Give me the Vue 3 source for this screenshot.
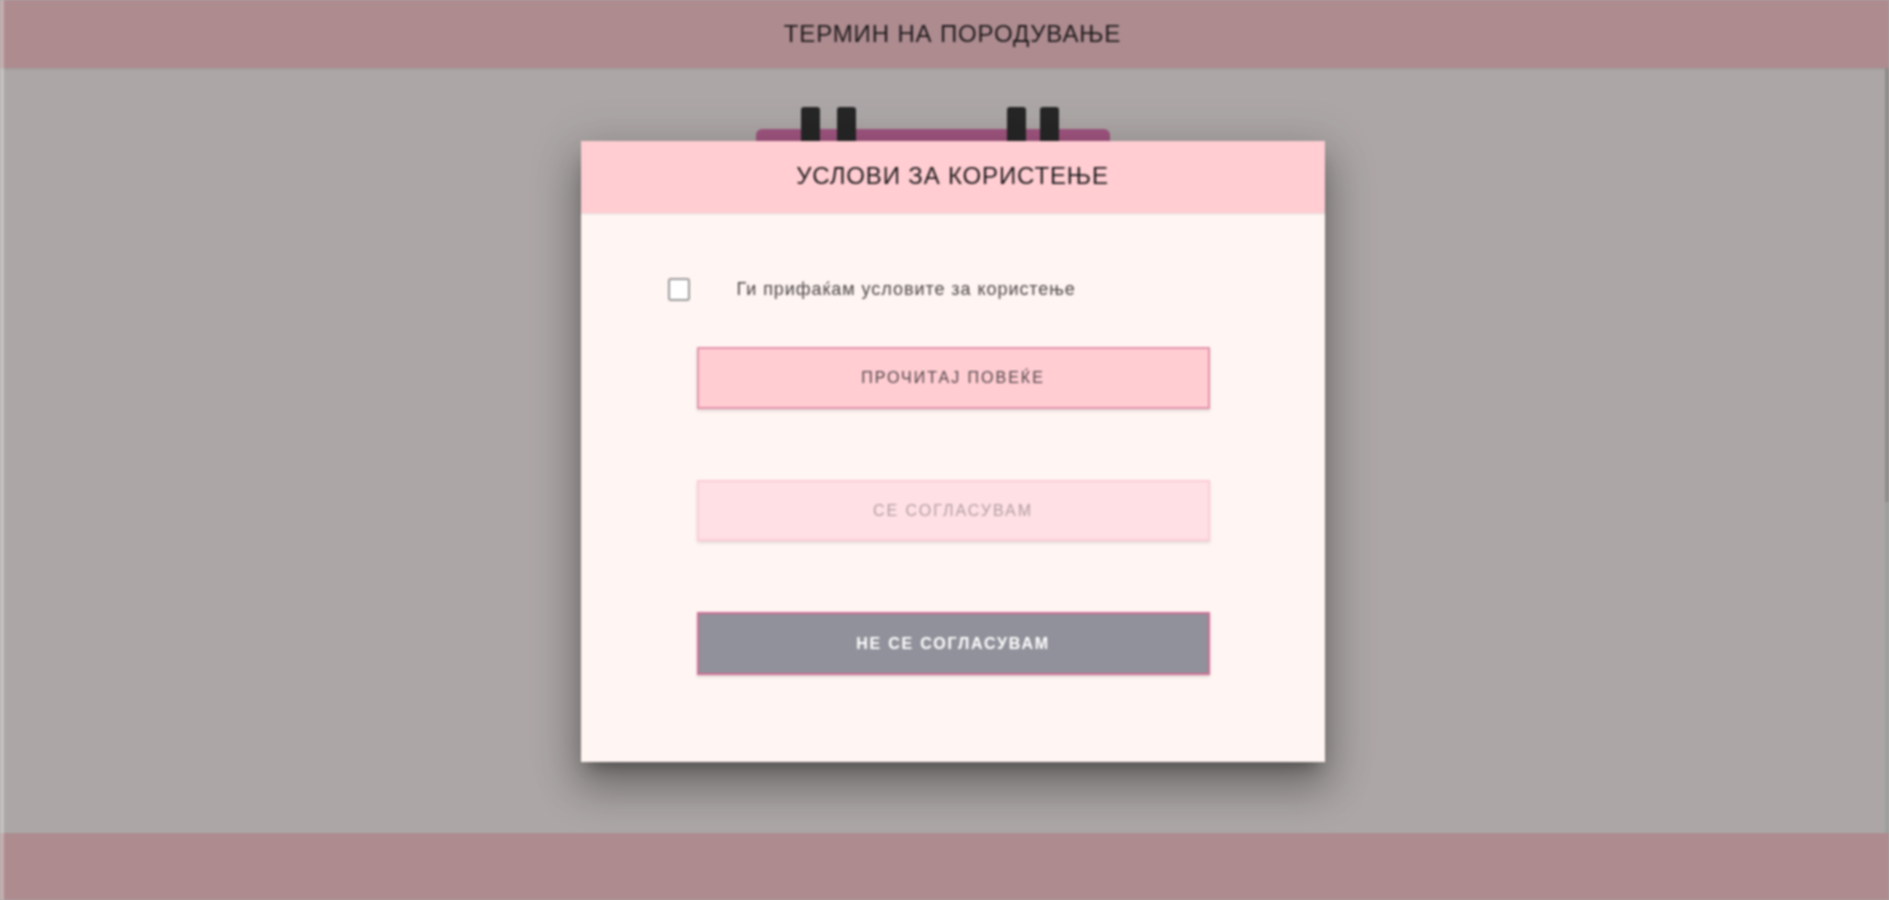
<template>
  <div class="page">
    <header class="bar top-bar">
      <h1 class="page-title">ТЕРМИН НА ПОРОДУВАЊЕ</h1>
    </header>

    <main class="content">
      <div class="dialog-wrap">
        <div class="calendar">
          <div v-for="(group, i) in pinGroups" :key="i" class="pin-group">
            <span v-for="pin in group" :key="pin" class="pin"></span>
          </div>
        </div>

        <section class="dialog">
          <div class="dialog-head">
            <h2 class="dialog-title">УСЛОВИ ЗА КОРИСТЕЊЕ</h2>
          </div>
          <div class="dialog-body">
            <label class="accept-row">
              <input v-model="accepted" type="checkbox" class="accept-box" />
              <span class="accept-text">Ги прифаќам условите за користење</span>
            </label>
            <div class="actions">
              <button type="button" class="btn btn-read">ПРОЧИТАЈ ПОВЕЌЕ</button>
              <button type="button" class="btn btn-agree" :disabled="!accepted">СЕ СОГЛАСУВАМ</button>
              <button type="button" class="btn btn-decline">НЕ СЕ СОГЛАСУВАМ</button>
            </div>
          </div>
        </section>
      </div>
    </main>

    <footer class="bar bottom-bar"></footer>

    <div class="edge edge-left"></div>
    <div class="edge edge-right"></div>
  </div>
</template>

<script setup>
import { ref } from 'vue';

const accepted = ref(false);
const pinGroups = [[1, 2], [3, 4]];
</script>

<style>
html, body {
  margin: 0;
  overflow: hidden;
  background: #aca7a6;
}
</style>

<style scoped>
.page {
  position: relative;
  height: 900px;
  display: flex;
  flex-direction: column;
  background: #aca7a6;
  font-family: "Liberation Sans", Arial, sans-serif;
  color: #1e1a1c;
  overflow: hidden;
  filter: blur(0.9px);
}

.bar {
  background: #ad8b8f;
  display: flex;
  align-items: center;
  justify-content: center;
  padding-left: 16px;
  flex: none;
}

.top-bar {
  height: 68px;
  box-shadow: 0 1px 2px rgba(0, 0, 0, 0.1);
}

.bottom-bar {
  height: 67px;
}

.page-title,
.dialog-title {
  margin: 0;
  font-size: 24px;
  font-weight: 400;
  line-height: 1;
  letter-spacing: 0.85px;
}

.content {
  flex: 1;
  display: flex;
  align-items: flex-start;
  justify-content: center;
  padding: 73px 0 0 16px;
}

.dialog-wrap {
  position: relative;
  width: 744px;
}

.calendar {
  position: absolute;
  left: 175px;
  bottom: 100%;
  width: 354px;
  height: 12px;
  background: #a0557f;
  border-radius: 6px 6px 0 0;
  display: flex;
  justify-content: space-between;
  padding: 0 51px 0 45px;
  box-sizing: border-box;
}

.pin-group {
  display: flex;
  gap: 17px;
  align-items: flex-end;
}

.pin-group:last-child {
  gap: 14px;
}

.pin {
  width: 19px;
  height: 34px;
  background: #262626;
  border-radius: 3px 3px 0 0;
}

.dialog {
  position: relative;
  height: 621px;
  background: #fff5f3;
  box-shadow: 0 11px 15px -7px rgba(0, 0, 0, 0.3), 0 24px 38px 3px rgba(0, 0, 0, 0.28), 0 9px 46px 8px rgba(0, 0, 0, 0.12);
}

.dialog-head {
  height: 72px;
  box-sizing: border-box;
  padding-bottom: 2px;
  background: #ffcdd2;
  display: flex;
  align-items: center;
  justify-content: center;
  box-shadow: 0 1px 2px rgba(0, 0, 0, 0.12);
}

.dialog-body {
  padding: 64px 115px 0 87px;
}

.accept-row {
  display: flex;
  align-items: center;
  gap: 47px;
  height: 24px;
}

.accept-box {
  appearance: none;
  margin: 0;
  width: 22px;
  height: 23px;
  background: #fff;
  border: 2px solid #9c9a9a;
  border-radius: 3px;
  box-sizing: border-box;
}

.accept-text {
  font-size: 18px;
  letter-spacing: 0.95px;
  color: #4a4546;
}

.actions {
  display: flex;
  flex-direction: column;
  gap: 71px;
  margin: 46px 0 0 29px;
}

.btn {
  height: 62px;
  font-family: inherit;
  font-size: 16px;
  letter-spacing: 2px;
  border: 2px solid #e492aa;
  background: #ffcdd2;
  color: #50454a;
  box-shadow: 0 2px 3px rgba(0, 0, 0, 0.12);
  padding: 0;
}

.btn-agree {
  height: 61px;
  background: #ffe0e4;
  border-color: #fccdd6;
  color: #b19ea3;
}

.btn-decline {
  height: 63px;
  background: #90919a;
  border-color: #cf6f94;
  color: #fff;
  font-weight: 700;
  letter-spacing: 1.8px;
}

.edge {
  position: absolute;
  top: 0;
  bottom: 0;
  width: 4px;
}

.edge-left {
  left: 0;
  background: rgba(255, 255, 255, 0.3);
}

.edge-right {
  right: 0;
  top: 68px;
  background: linear-gradient(#8f8c8c 0 434px, #9d9f9d 434px 765px, transparent 765px);
}
</style>
